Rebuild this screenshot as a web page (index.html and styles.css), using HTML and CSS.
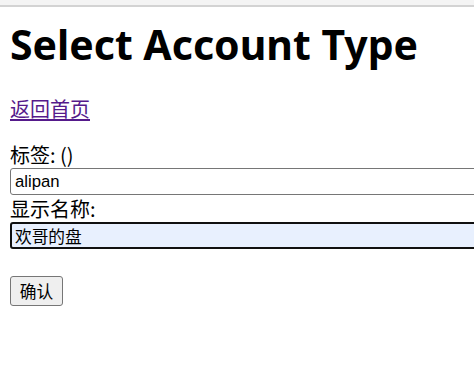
FILE: index.html
```html
<!DOCTYPE html>
<html lang="zh-CN">
<head>
<meta charset="utf-8">
<title>Select Account Type</title>
<link rel="stylesheet" href="styles.css">
</head>
<body>
<div class="topbar"></div>
<main class="page">
  <h1 class="title">Select Account Type</h1>
  <p class="back"><a href="#" class="back-link">返回首页</a></p>
  <form class="form">
    <label class="label" for="tag">标签: ()</label>
    <input class="field" id="tag" type="text" value="alipan">
    <label class="label" for="name">显示名称:</label>
    <input class="field field-focus" id="name" type="text" value="欢哥的盘">
    <div class="actions"><button class="btn" type="button">确认</button></div>
  </form>
</main>
</body>
</html>
```

FILE: styles.css
```css
html, body {
  margin: 0;
  padding: 0;
  background: #ffffff;
  overflow: hidden;
}
body {
  font-family: "Noto Sans", "Noto Sans CJK SC", sans-serif;
  color: #000;
}
.topbar {
  height: 5px;
  background: #f4f4f4;
  border-bottom: 2px solid #d3d3d3;
}
.page {
  padding: 0 10px;
  display: flex;
  flex-direction: column;
  align-items: flex-start;
}
.title {
  margin: 13px 0 0;
  font-size: 41px;
  line-height: 48px;
  font-weight: 700;
  white-space: nowrap;
}
.back {
  margin: 29px 0 0;
  font-family: "Noto Sans CJK SC", sans-serif;
  font-size: 20px;
  line-height: 24px;
}
.back-link {
  color: #551a8b;
  text-decoration: underline;
  text-underline-offset: 2px;
}
.form {
  margin-top: 20px;
  display: flex;
  flex-direction: column;
  align-items: flex-start;
}
.label {
  font-family: "Noto Sans CJK SC", sans-serif;
  font-size: 20px;
  line-height: 27px;
}
.field {
  box-sizing: border-box;
  width: 520px;
  height: 27px;
  margin: 0;
  padding: 0 4px;
  border: 1px solid #767676;
  border-radius: 3px;
  background: #fff;
  font-family: "Liberation Sans", "Noto Sans CJK SC", sans-serif;
  font-size: 16.7px;
  color: #000;
  outline: none;
}
.field-focus {
  border: 2px solid #101010;
  background: #e8f0fe;
  padding: 0 3px;
}
.actions {
  margin-top: 27px;
}
.btn {
  box-sizing: border-box;
  height: 30px;
  width: 53px;
  padding: 0;
  border: 1px solid #767676;
  border-radius: 3px;
  background: #efefef;
  font-family: "Noto Sans CJK SC", sans-serif;
  font-size: 16.7px;
  color: #000;
}
```
